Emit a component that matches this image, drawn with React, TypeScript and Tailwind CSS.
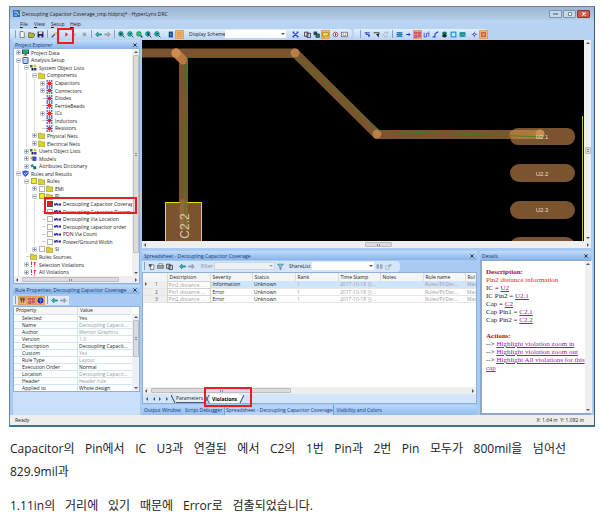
import React from "react";

type Kind =
  | "monitor" | "doc" | "objects" | "folder" | "comp" | "models" | "attrs" | "shield" | "abc" | "viol";

function TreeIcon({ kind }: { kind: Kind }) {
  return (
    <svg viewBox="0 0 14 14" className="size-[7px] shrink-0" aria-hidden="true">
      {kind === "monitor" && (
        <>
          <rect x="0" y="1" width="14" height="9" fill="#27508f" />
          <rect x="2" y="2" width="10" height="7" fill="#2fae3e" />
          <path d="M5 10h4v2h2v1H3v-1h2z" fill="#555" />
        </>
      )}
      {kind === "doc" && (
        <>
          <rect x="2" y="1" width="10" height="12" rx="1" fill="#eef2ff" stroke="#2c3fe0" strokeWidth="2" />
          <path d="M4 5h6M4 7.500h6M4 10h6" stroke="#5a74ff" />
        </>
      )}
      {kind === "objects" && (
        <>
          <rect x="0" y="2" width="5" height="5" fill="#2d7a2d" />
          <circle cx="10" cy="4" r="3" fill="#d8c820" />
          <rect x="3" y="8" width="4" height="5" fill="#222" />
          <path d="M8 8h5v5H8z" fill="#3434d8" />
        </>
      )}
      {kind === "folder" && <path d="M1 2h5l2 2h6v9H1z" fill="#d8cf33" stroke="#8d8620" />}
      {kind === "comp" && (
        <>
          <path d="M1 2h12M1 7h12M1 12h12" stroke="#3a48d8" strokeWidth="3" strokeDasharray="3 1.500" />
          <rect x="4" y="4" width="6" height="6" fill="#e02a3a" />
        </>
      )}
      {kind === "models" && (
        <>
          <path d="M0 6l5-4 3 3-3 7z" fill="#e0b020" />
          <rect x="5" y="3" width="8" height="9" rx="2" fill="#3a4ce8" />
        </>
      )}
      {kind === "attrs" && (
        <>
          <path d="M1 4l5-2 2 5-5 2z" fill="#159a8c" />
          <path d="M6 7l6-1 1 6-6 1z" fill="#107060" />
        </>
      )}
      {kind === "shield" && (
        <>
          <path d="M1 2l6-1 6 1v6l-6 6-6-6z" fill="#3654e8" />
          <path d="M4 6l3 3 4-5" stroke="#fff" strokeWidth="1.500" fill="none" />
        </>
      )}
      {kind === "abc" && (
        <>
          <path d="M0 7h14" stroke="#2a2a9a" strokeWidth="4" strokeDasharray="4 1" />
          <path d="M5 4v3" stroke="#2a2a9a" strokeWidth="2" />
        </>
      )}
      {kind === "viol" && (
        <path d="M3 1v7M3 10v2M9 3v6M9 11v2M7 4l2-2 3 2" stroke="#e83030" strokeWidth="2" fill="none" />
      )}
    </svg>
  );
}

type Row = { l: number; t: string; k: Kind; x?: "+" | "-"; c?: "off" | "on" | "red" };
const rows: Row[] = [
  { l: 0, t: "Project Data", k: "monitor", x: "+" },
  { l: 0, t: "Analysis Setup", k: "doc", x: "-" },
  { l: 1, t: "System Object Lists", k: "objects", x: "-" },
  { l: 2, t: "Components", k: "folder", x: "-" },
  { l: 3, t: "Capacitors", k: "comp", x: "+" },
  { l: 3, t: "Connectors", k: "comp", x: "+" },
  { l: 3, t: "Diodes", k: "comp" },
  { l: 3, t: "FerriteBeads", k: "comp" },
  { l: 3, t: "ICs", k: "comp", x: "+" },
  { l: 3, t: "Inductors", k: "comp" },
  { l: 3, t: "Resistors", k: "comp" },
  { l: 2, t: "Physical Nets", k: "folder", x: "+" },
  { l: 2, t: "Electrical Nets", k: "folder", x: "+" },
  { l: 1, t: "Users Object Lists", k: "objects", x: "+" },
  { l: 1, t: "Models", k: "models", x: "+" },
  { l: 1, t: "Attributes Dictionary", k: "attrs", x: "+" },
  { l: 0, t: "Rules and Results", k: "shield", x: "-" },
  { l: 1, t: "Rules", k: "folder", x: "-", c: "on" },
  { l: 2, t: "EMI", k: "folder", x: "+", c: "off" },
  { l: 2, t: "PI", k: "folder", x: "-", c: "on" },
  { l: 3, t: "Decoupling Capacitor Coverage", k: "abc", c: "red" },
  { l: 3, t: "Decoupling Capacitor Placement", k: "abc", c: "off" },
  { l: 3, t: "Decoupling Via Location", k: "abc", c: "off" },
  { l: 3, t: "Decoupling capacitor order", k: "abc", c: "off" },
  { l: 3, t: "PDN Via Count", k: "abc", c: "off" },
  { l: 3, t: "Power/Ground Width", k: "abc", c: "off" },
  { l: 2, t: "SI", k: "folder", x: "+", c: "off" },
  { l: 1, t: "Rules Sources", k: "folder" },
  { l: 1, t: "Selection Violations", k: "viol", x: "+" },
  { l: 1, t: "All Violations", k: "viol", x: "+" },
];

const boxStyle = {
  off: "bg-white border-[#b4b4b4]",
  on: "bg-[#f2ea2e] border-[#b0a840]",
  red: "bg-[#e02020] border-[#555]",
};

function TreeRow({ row }: { row: Row }) {
  const id = "rule-" + row.t.replace(/\W+/g, "-");
  return (
    <li className="flex min-h-0 flex-1 items-center">
      {Array.from({ length: row.l }, (_, i) => (
        <span key={i} className="flex h-full w-2 shrink-0 justify-center">
          <span className="w-px bg-[#dedede]" />
        </span>
      ))}
      <span className="flex h-full w-2 shrink-0 items-center justify-center">
        {row.x ? (
          <button aria-label={"Toggle " + row.t} className="flex size-[5px] items-center justify-center rounded-[1px] border border-[#c4c8d0] bg-[#f4f6fa]">
            <svg viewBox="0 0 3 3" className="size-[3px]" aria-hidden="true">
              <path d={row.x === "+" ? "M0 1.500h3M1.500 0v3" : "M0 1.500h3"} stroke="#6a7aaa" strokeWidth=".8" />
            </svg>
          </button>
        ) : (
          <span className="ml-1 h-px w-1 bg-[#d0d0d0]" />
        )}
      </span>
      {row.c && (
        <input
          id={id}
          type="checkbox"
          defaultChecked={row.c !== "off"}
          className={"mx-px size-[6px] shrink-0 appearance-none border " + boxStyle[row.c]}
        />
      )}
      <TreeIcon kind={row.k} />
      {row.c ? (
        <label htmlFor={id} className="ml-[2px] whitespace-nowrap">{row.t}</label>
      ) : (
        <span className="ml-[2px] whitespace-nowrap">{row.t}</span>
      )}
    </li>
  );
}

const tools: Record<string, React.ReactNode> = {
  "New": <path d="M2 1h5l2 2v8H2z" fill="#fff" stroke="#333" />,
  "Open": <path d="M1 3h4l1 1h4v2h2l-3 5H1z" fill="#c8b820" stroke="#333" />,
  "Save": <><path d="M1 1h10v10H1z" fill="#1c1c50" /><path d="M3 1h6v4H3zM4 8h4v3H4z" fill="#dde" /></>,
  "Wizard": <><path d="M1 11l6-6" stroke="#444" strokeWidth="2" /><path d="M6 2h5v5z" fill="#e8c020" /></>,
  "Run": <path d="M4 2l5 4-5 4z" fill="#e83020" />,
  "Step": <path d="M3 3l5 3-5 3z" fill="#b0b8c4" />,
  "Stop": <rect x="3" y="3" width="6" height="6" fill="#a0a8b4" />,
  "Back": <path d="M1 6l4-4v3h6v2H5v3z" fill="#20c8b8" stroke="#106060" />,
  "Forward": <path d="M11 6L7 2v3H1v2h6v3z" fill="#a8aeb6" stroke="#8a9098" />,
  "Zoom In": <><circle cx="5" cy="5" r="4" fill="#20d0b0" stroke="#105060" /><path d="M8 8l3 3M3 5h4M5 3v4" stroke="#123" strokeWidth="1.500" /></>,
  "Zoom Out": <><circle cx="5" cy="5" r="4" fill="#20d0b0" stroke="#105060" /><path d="M8 8l3 3M3 5h4" stroke="#123" strokeWidth="1.500" /></>,
  "Zoom Area": <><circle cx="5" cy="5" r="4" fill="#30d060" stroke="#105060" /><path d="M8 8l3 3" stroke="#123" strokeWidth="2" /></>,
  "Zoom Fit": <><circle cx="5" cy="5" r="4" fill="#20d0c0" stroke="#105060" /><path d="M8 8l3 3M5 2v5h2" stroke="#123" strokeWidth="1.500" /></>,
  "Zoom Previous": <><circle cx="5" cy="5" r="4" fill="#20d0c0" stroke="#105060" /><path d="M8 8l3 3M3 5h4L5 3" stroke="#123" strokeWidth="1.500" fill="none" /></>,
  "Board": <><rect x="3" y="1" width="7" height="10" fill="#1030d8" /><rect x="5" y="3" width="3" height="6" fill="#20a060" /></>,
  "Grid": <path d="M2 3h8M2 6h8M2 9h8M3 2v8M6 2v8M9 2v8" stroke="#d89858" />,
  "Fit": <path d="M1 2l10 8M1 10l10-8M1 2h3M8 2h3M1 10h3M8 10h3" stroke="#3040e8" strokeWidth="2" />,
  "Copy": <path d="M1 2h6v7H1zM5 4h6v7H5z" fill="#e8eef8" stroke="#334" strokeWidth="1.500" />,
  "Layers": <><path d="M1 1h6v6H1z" fill="#30406a" /><path d="M5 5h6v6H5z" fill="#208050" stroke="#223" /></>,
  "Comment": <path d="M1 3h10v5H6l-3 3V8H1z" fill="#f8e840" stroke="#886010" />,
  "Probe": <><circle cx="6" cy="6" r="4" fill="#fff" stroke="#d04050" strokeWidth="1.500" /><path d="M5 3l3 3-3 3z" fill="#333" /></>,
  "Keyboard": <><rect x="1" y="2" width="10" height="8" fill="#f4f4f4" stroke="#444" /><path d="M3 5h2M7 5h2M3 8h6" stroke="#444" /></>,
  "Net": <path d="M1 3h9M4 3v3h4v4M9 6v4" stroke="#3848d0" strokeWidth="2" fill="none" />,
  "Select": <><path d="M1 3h9v3" stroke="#444" strokeWidth="2" fill="none" /><path d="M5 5h5v6z" fill="#222" /></>,
  "Rotate": <path d="M10 4a4 4 0 1 0 0 4M10 1v3H7" stroke="#a8b0bc" strokeWidth="1.500" fill="none" />,
  "Chip": <><path d="M1 3h10M1 6h10M1 9h10" stroke="#2038c8" strokeWidth="2" /><rect x="4" y="2" width="5" height="8" fill="#20a0a0" /></>,
  "Pin": <path d="M2 6h7M7 4v4" stroke="#2038c8" strokeWidth="2" />,
  "Parts": <path d="M1 2h4v3H1zM7 2h4v3H7zM1 8h4v3H1zM7 7h4v3H7z" fill="none" stroke="#b03868" strokeWidth="1.500" />,
  "Pads": <path d="M2 3v7h4V4h4v6M9 2h2" stroke="#3848e0" strokeWidth="1.500" fill="none" />,
  "Traces": <path d="M1 10h4V5l4-3h2" stroke="#3040e8" strokeWidth="2" fill="none" />,
  "Vias": <><ellipse cx="6" cy="4" rx="4" ry="3" fill="#107858" /><ellipse cx="6" cy="8" rx="4" ry="3" fill="#103040" /></>,
  "Planes": <rect x="2" y="2" width="8" height="8" fill="#c0f0ff" stroke="#1090f0" strokeWidth="2" />,
  "View": <><rect x="1" y="2" width="10" height="8" fill="#108898" /><path d="M2 9l4-4 4 3" stroke="#80f0a0" fill="none" /></>,
  "Center": <><path d="M1 6h10M6 1v10" stroke="#3848e0" /><rect x="4" y="4" width="4" height="4" fill="#dde" stroke="#3848e0" /></>,
  "Mark": <><rect x="2" y="2" width="8" height="8" fill="#c05050" /><path d="M4 4h4v4H4z" fill="#f0b060" /></>,
  "Props": <><path d="M4 3h6v8H4z" fill="#fff" stroke="#333" /><path d="M1 2h5v4H2z" fill="#444" /></>,
  "Export": <><path d="M1 5h6v6H1z" fill="#e0e6ee" stroke="#9aa6b8" /><path d="M4 7l4-5h3v3z" fill="#9aa6b8" /></>,
  "Print": <><rect x="1" y="4" width="10" height="5" fill="#9aa0a8" stroke="#555" /><path d="M3 1h6v3H3z" fill="#fff" stroke="#666" /></>,
  "Filter": <path d="M1 2h10L7 7v4H5V7z" fill="#90c8c8" stroke="#207080" />,
  "Find": <path d="M1 2h4v8H1zM7 2h4v8H7z" fill="#9aa6b8" />,
  "Sort": <path d="M1 2h10M2 5h9M4 2v8M8 2v8" stroke="#404060" fill="none" strokeWidth="1.500" />,
  "Help": <><circle cx="6" cy="6" r="5" fill="#1828b8" /><path d="M4 5q2-3 4 0l-2 2v2" stroke="#fff" fill="none" /></>,
};

function Tool({ name, on }: { name: string; on?: boolean }) {
  return (
    <button
      aria-label={name}
      className={"flex size-[9px] shrink-0 items-center justify-center " + (on ? "bg-[#f6b26b] outline outline-[#e0a060] -outline-offset-1" : "")}
    >
      <svg viewBox="0 0 12 12" className="size-[7px]" aria-hidden="true">{tools[name]}</svg>
    </button>
  );
}

const Sep = () => <span className="mx-[2px] h-2 w-px shrink-0 bg-[#7f9fcf]" />;

function PanelHeader({ title }: { title: string }) {
  return (
    <header className="flex h-[9px] shrink-0 items-center justify-between bg-linear-to-b from-[#c3dcfb] to-[#86b3ea] px-[2px] text-[#16366f]">
      <h2 className="whitespace-nowrap">{title}</h2>
      <button aria-label={"Close " + title} className="mr-px">
        <svg viewBox="0 0 5 5" className="size-1" aria-hidden="true"><path d="M.5.5l4 4M4.500.5l-4 4" stroke="#111" /></svg>
      </button>
    </header>
  );
}

function Arrow({ dir }: { dir: "u" | "d" | "l" | "r" }) {
  const d = { u: "M1 4l2-2 2 2z", d: "M1 2l2 2 2-2z", l: "M4 1L2 3l2 2z", r: "M2 1l2 2-2 2z" }[dir];
  return (
    <svg viewBox="0 0 6 6" className="size-[6px] shrink-0" aria-hidden="true"><path d={d} fill="#555" /></svg>
  );
}

function HBar({ before, thumb }: { before: string; thumb: string }) {
  return (
    <div className="flex h-[7px] shrink-0 items-center bg-[#efefef]">
      <Arrow dir="l" />
      <div className="flex flex-1">
        <span className={before} />
        <span className={"flex h-[5px] items-center justify-center gap-px rounded-[1px] border border-[#bdbdbd] bg-[#dcdcdc] " + thumb}>
          <span className="h-[2px] w-px bg-[#888]" />
          <span className="h-[2px] w-px bg-[#888]" />
        </span>
      </div>
      <Arrow dir="r" />
    </div>
  );
}

function VBar({ before, thumb }: { before: string; thumb: string }) {
  return (
    <div className="flex w-[7px] shrink-0 flex-col items-center bg-[#efefef]">
      <Arrow dir="u" />
      <div className="flex min-h-0 w-full flex-1 flex-col items-center">
        <span className={before} />
        {thumb && (
          <span className={"flex w-[6px] flex-col items-center justify-center gap-px rounded-[1px] border border-[#bdbdbd] bg-[#dcdcdc] " + thumb}>
            <span className="h-px w-[2px] bg-[#888]" />
            <span className="h-px w-[2px] bg-[#888]" />
          </span>
        )}
      </div>
      <Arrow dir="d" />
    </div>
  );
}

const props: [string, string, boolean][] = [
  ["Selected", "Yes", true],
  ["Name", "Decoupling Capacit...", false],
  ["Author", "Mentor Graphics", false],
  ["Version", "1.0", false],
  ["Description", "Decoupling Capacit...", true],
  ["Custom", "Yes", false],
  ["Rule Type", "Layout", false],
  ["Execution Order", "Normal", true],
  ["Location", "Decoupling Capacit...", false],
  ["Header", "header.rule", false],
  ["Applied to", "Whole design", true],
];

const violations = [
  ["1", "Pin2 distance ...", "Information"],
  ["2", "Pin1 distance ...", "Error"],
  ["3", "Pin2 distance ...", "Error"],
];

function Board() {
  return (
    <svg viewBox="142 40 441 201" preserveAspectRatio="xMinYMin meet" className="h-full min-w-0 flex-1 bg-black" role="img" aria-label="Board layout">
      <g stroke="#7a532f" strokeWidth="9" fill="none">
        <path d="M142 53H295" />
        <path d="M295 53L377 134.500" strokeLinecap="round" />
        <path d="M377 134.500H540" />
        <path d="M183.500 60V228" strokeLinecap="round" />
      </g>
      <rect x="165.500" y="202.500" width="36" height="45" fill="#7a532f" stroke="#e6e000" />
      <path d="M183.500 203V226" stroke="#96653a" strokeWidth="8" strokeLinecap="round" />
      <g fill="#7a532f">
        <rect x="510" y="128" width="65" height="17" rx="8" />
        <rect x="510" y="164" width="65" height="18" rx="9" />
        <rect x="510" y="201" width="65" height="18" rx="9" />
        <rect x="510" y="237" width="65" height="18" rx="9" />
      </g>
      <path d="M514 134.500H540" stroke="#b07640" strokeWidth="9" strokeLinecap="round" />
      <path d="M176 53l7 7" stroke="#b87a45" strokeWidth="9" strokeLinecap="round" />
      <g fill="#d08c50">
        <circle cx="176" cy="53" r="4.500" />
        <circle cx="295" cy="53" r="4.500" fill="#b87d48" />
        <circle cx="377" cy="134" r="4.500" fill="#b87d48" />
        <circle cx="540" cy="134" r="4.500" />
      </g>
      <path d="M185 228V125L187 57.500H297L380 131L545 137" stroke="#2c8a12" strokeWidth=".8" fill="none" />
      <path d="M582.500 116V241" stroke="#c8c400" />
      <g fill="#eadfce" fontFamily="Liberation Sans, sans-serif" fontSize="6" textAnchor="middle">
        <text x="542" y="139">U2.1</text>
        <text x="542" y="176">U2.2</text>
        <text x="542" y="212">U2.3</text>
        <text transform="translate(189 226) rotate(-90)" fontSize="12" fill="#d8cbb8">C2.2</text>
      </g>
    </svg>
  );
}

const link = "text-[#9a1aa0] underline";

export default function App() {
  return (
    <main className="bg-white pt-[6px] text-[5px] leading-[6px] text-[#1c1c1c] font-['Open_Sans','Noto_Sans_CJK_KR',sans-serif]">
      <section className="relative mr-[5px] ml-[9px] border border-b-2 border-[#6d8299] border-r-[#38606e] border-b-[#37798a] bg-[#b9d3f2]">
        <header className="flex h-[13px] items-center bg-linear-to-b from-[#9db5cf] to-[#b4cdea] pr-1 pl-[3px]">
          <svg viewBox="0 0 14 14" className="mr-[2px] size-[7px]" aria-hidden="true">
            <rect width="14" height="14" fill="#2c6fd8" /><path d="M2 4h6l4 6M3 10h5" stroke="#fff" strokeWidth="1.500" fill="none" />
          </svg>
          <h1 className="flex-1 whitespace-nowrap">Decoupling Capacitor Coverage_tmp.hldproj* - HyperLynx DRC</h1>
          <div className="flex gap-px text-[#33475f]">
            <button aria-label="Minimize" className="flex h-2 w-[13px] items-center justify-center rounded-[1px] border border-[#7d94ad] bg-[#c8d8ea]"><span className="h-[2px] w-[5px] border border-[#8193a8] bg-white" /></button>
            <button aria-label="Maximize" className="flex h-2 w-[13px] items-center justify-center rounded-[1px] border border-[#7d94ad] bg-[#c8d8ea]"><span className="size-1 border border-[#8193a8] bg-white" /></button>
            <button aria-label="Close" className="flex h-2 w-[13px] items-center justify-center rounded-[1px] border border-[#7b3a34] bg-[#cf5a48]">
              <svg viewBox="0 0 5 5" className="size-1" aria-hidden="true"><path d="M.5.5l4 4M4.500.5l-4 4" stroke="#fff" strokeWidth="1.500" /></svg>
            </button>
          </div>
        </header>

        <nav className="flex h-2 items-center gap-[5px] pl-[10px]">
          {["File", "View", "Setup", "Help"].map((m) => (
            <button key={m} className="w-3 text-left whitespace-nowrap first:w-[9px] nth-3:w-[14px]"><span className="underline">{m[0]}</span>{m.slice(1)}</button>
          ))}
        </nav>

        <div className="flex h-3 items-center">
          <div className="flex h-[10px] items-center rounded-r-sm bg-linear-to-b from-[#e2eefd] to-[#bcd5f5] pr-[3px] pl-[3px]">
            <Sep /><Tool name="New" /><Tool name="Open" /><Tool name="Save" /><Sep />
            <Tool name="Wizard" /><span className="w-[3px]" /><Tool name="Run" /><Tool name="Step" /><Tool name="Stop" />
            <Sep /><Tool name="Back" /><Tool name="Forward" /><Sep />
            <Tool name="Zoom In" /><Tool name="Zoom Out" /><Tool name="Zoom Area" /><Tool name="Zoom Fit" /><Tool name="Zoom Previous" />
            <span className="w-1" /><Tool name="Board" /><Tool name="Grid" on />
            <label htmlFor="scheme" className="ml-[5px] w-[36px] whitespace-nowrap">Display Scheme</label>
            <span className="relative flex h-2 w-[61px] bg-white">
              <select id="scheme" className="w-full appearance-none bg-transparent"><option></option></select>
              <span className="pointer-events-none absolute top-px right-0"><Arrow dir="d" /></span>
            </span>
            <span className="w-[5px]" /><Tool name="Fit" /><span className="w-[3px]" />
            <Tool name="Copy" /><Tool name="Layers" /><Tool name="Comment" on /><span className="w-px" /><Tool name="Probe" /><Tool name="Keyboard" />
          </div>
          <div className="ml-[2px] flex h-[10px] items-center rounded-r-sm bg-linear-to-b from-[#e2eefd] to-[#bcd5f5] pl-1">
            <Sep /><Tool name="Net" /><Tool name="Select" /><Tool name="Rotate" /><Sep />
            <Tool name="Chip" /><Tool name="Pin" /><Tool name="Parts" on /><Tool name="Pads" /><Tool name="Traces" /><Tool name="Vias" /><Tool name="Planes" /><Tool name="View" />
            <span className="w-[3px]" /><Tool name="Center" /><Tool name="Mark" on />
          </div>
        </div>

        <div className="flex gap-[2px] bg-[#a9caf3] pr-[3px] pl-[3px]">
          <aside className="flex w-[127px] shrink-0 flex-col">
            <PanelHeader title="Project Explorer" />
            <div className="flex flex-col border border-t-0 border-[#8fb0dc] bg-white">
              <div className="flex h-[227px]">
                <ul className="flex min-w-0 flex-1 flex-col overflow-hidden">
                  {rows.map((r) => <TreeRow key={r.t} row={r} />)}
                </ul>
                <VBar before="" thumb="h-[198px]" />
              </div>
              <HBar before="w-[2px]" thumb="w-[97px]" />
            </div>
            <div className="mt-px flex flex-1 flex-col bg-[#c9e0fc]">
              <PanelHeader title="Rule Properties: Decoupling Capacitor Coverage" />
              <div className="flex h-3 items-center bg-[#a9caf3]">
                <div className="flex items-center bg-[#dceafc] pr-px">
                  <Sep /><Tool name="Sort" on /><Tool name="Parts" on /><Tool name="Help" on /><Sep /><Tool name="Back" /><Tool name="Forward" />
                </div>
              </div>
              <div className="border border-[#8fb0dc] bg-white">
                <div className="flex">
                  <table className="flex-1 table-fixed border-collapse">
                    <thead>
                      <tr className="h-[7px] bg-[#f6f6f6] text-left">
                        <th className="w-[63px] p-0 pl-[2px] leading-[6px] font-normal">Property</th>
                        <th className="w-[54px] border-l border-[#ddd] p-0 pl-[2px] leading-[6px] font-normal">Value</th>
                      </tr>
                    </thead>
                    <tbody>
                      {props.map(([k, v, dark]) => (
                        <tr key={k} className="h-[7px] border-t border-[#cfe6f7]">
                          <th scope="row" className="py-0 pl-2 text-left leading-[6px] font-normal whitespace-nowrap">{k}</th>
                          <td className={"border-l border-[#cfe6f7] py-0 pl-px leading-[6px] whitespace-nowrap " + (dark ? "" : "text-[#9a9a9a]")}>{v}</td>
                        </tr>
                      ))}
                    </tbody>
                  </table>
                  <div className="flex pt-[7px]"><VBar before="" thumb="h-[37px]" /></div>
                </div>
              </div>
              <div className="h-[23px]" />
            </div>
          </aside>

          <div className="flex min-w-0 flex-1 flex-col">
            <div className="flex h-[201px] bg-black">
              <Board />
              <VBar before="h-[101px]" thumb="h-[7px]" />
            </div>
            <HBar before="w-[217px]" thumb="w-[27px]" />
            <div className="mt-[3px] flex flex-1 gap-[3px]">
              <section className="flex min-w-0 flex-1 flex-col">
                <PanelHeader title="Spreadsheet - Decoupling Capacitor Coverage" />
                <div className="flex h-3 items-center">
                  <div className="flex h-[11px] items-center rounded-r-sm bg-[#d5e6fb] pr-[7px]">
                    <Sep /><Tool name="Props" /><Tool name="Print" /><Tool name="Copy" /><span className="w-[4px]" /><Tool name="Back" /><Tool name="Forward" />
                    <label htmlFor="filter" className="ml-[5px] w-[13px] text-[#7f8da0]">Filter</label>
                    <span className="relative flex h-2 w-[61px] border border-[#cdd6e0] bg-[#eef0f2]">
                      <select id="filter" disabled className="w-full appearance-none"><option></option></select>
                      <span className="pointer-events-none absolute top-0 right-0 opacity-50"><Arrow dir="d" /></span>
                    </span>
                    <span className="w-px" /><Tool name="Filter" />
                    <label htmlFor="share" className="mr-px ml-1 w-[22px] whitespace-nowrap">ShareList</label>
                    <span className="relative flex h-2 w-[62px] bg-white">
                      <select id="share" className="w-full appearance-none"><option></option></select>
                      <span className="pointer-events-none absolute top-px right-0"><Arrow dir="d" /></span>
                    </span>
                    <span className="w-px" /><Tool name="Find" /><Tool name="Export" />
                  </div>
                </div>
                <div className="flex flex-1 flex-col border border-[#8fb0dc] bg-white">
                  <div className="flex-1">
                    <table className="w-full table-fixed border-collapse text-left whitespace-nowrap">
                      <colgroup>
                        <col className="w-[24px]" /><col className="w-[43px]" /><col className="w-[42px]" /><col className="w-[43px]" /><col className="w-[43px]" />
                        <col className="w-[42px]" /><col className="w-[43px]" /><col className="w-[42px]" /><col />
                      </colgroup>
                      <thead>
                        <tr className="h-2 bg-[#f5f5f5]">
                          <td></td>
                          {["Description", "Severity", "Status", "Rank", "Time Stamp", "Notes", "Rule name", "Rul"].map((h) => (
                            <th key={h} className="overflow-hidden border-l border-[#dcdcdc] p-0 pl-[2px] font-normal">{h}</th>
                          ))}
                        </tr>
                      </thead>
                      <tbody>
                        {violations.map(([n, d, s], i) => (
                          <tr key={n} className={"h-[7px] border-b border-[#e6e6e6] text-[#9a9a9a] " + (i === 0 ? "bg-[#cfe5fc]" : "")}>
                            <th scope="row" className="bg-[#eeeeee] p-0 font-normal text-[#555]">
                              <span className="flex items-center"><span className="w-3">{i === 0 && <Arrow dir="r" />}</span>{n}</span>
                            </th>
                            <td className="overflow-hidden border border-[#d2d2d2] bg-white p-0 pl-px leading-[6px]">{d}</td>
                            <td className="p-0 pl-[2px] leading-[6px] text-[#1c1c1c]">{s}</td>
                            <td className="p-0 pl-[2px] leading-[6px] text-[#1c1c1c]">Unknown</td>
                            <td className="p-0 pl-[2px] leading-[6px]">1</td>
                            <td className="p-0 pl-[2px] leading-[6px]">2017-10-18 오...</td>
                            <td className="p-0"></td>
                            <td className="p-0 pl-[2px] leading-[6px]">Rules/PI/Dec...</td>
                            <td className="overflow-hidden p-0 pl-[2px] leading-[6px]">Mac</td>
                          </tr>
                        ))}
                      </tbody>
                    </table>
                  </div>
                  <HBar before="w-[2px]" thumb="w-[140px]" />
                  <div className="flex h-[9px] items-center bg-[#d3e5fa]">
                    <div className="flex w-[28px] justify-between px-px"><Arrow dir="l" /><Arrow dir="l" /><Arrow dir="r" /><Arrow dir="r" /></div>
                    <svg viewBox="0 0 5 8" className="h-2 w-[5px]" aria-hidden="true"><path d="M0 0l4 8" stroke="#335" fill="none" /></svg>
                    <button className="h-full border-b border-[#556] bg-[#e4effc] pr-px">Parameters</button>
                    <svg viewBox="0 0 6 8" className="h-2 w-[6px]" aria-hidden="true"><path d="M5 0L1 8M1 0l4 8" stroke="#335" strokeWidth=".8" fill="none" /></svg>
                    <button className="h-full bg-white px-[2px] font-bold text-black">Violations</button>
                    <svg viewBox="0 0 5 8" className="h-2 w-[5px]" aria-hidden="true"><path d="M0 0h5L1 8H0z" fill="#fff" /><path d="M5 0L1 8" stroke="#335" /></svg>
                  </div>
                </div>
                <nav className="mt-px flex h-[10px] items-center bg-linear-to-b from-[#b7d5fa] to-[#93bdf0] whitespace-nowrap text-[#16366f]">
                  <button className="w-[41px] pl-[2px] text-left">Output Window</button>
                  <button className="w-[41px] pl-[2px] text-left">Script Debugger</button>
                  <button className="h-full border-x border-[#6f9bd6] bg-[#b5d3f8] px-px text-center">Spreadsheet - Decoupling Capacitor Coverage</button>
                  <button className="pl-[2px]">Visibility and Colors</button>
                </nav>
              </section>

              <aside className="flex w-[111px] shrink-0 flex-col">
                <PanelHeader title="Details" />
                <div className="flex flex-1 border-2 border-t border-[#8fa8c8] bg-white">
                  <div className="flex-1 pt-[7px] pl-1 font-['Liberation_Serif',serif] text-[7px] leading-[8px] whitespace-nowrap">
                    <h3 className="font-bold text-[#a01414]">Description:</h3>
                    <p className="text-[#f02020]">Pin2 distance information</p>
                    <p>IC = <a href="#u2" className={link}>U2</a></p>
                    <p>IC Pin2 = <a href="#u21" className={link}>U2.1</a></p>
                    <p>Cap = <a href="#c2" className={link}>C2</a></p>
                    <p>Cap Pin1 = <a href="#c21" className={link}>C2.1</a></p>
                    <p>Cap Pin2 = <a href="#c22" className={link}>C2.2</a></p>
                    <h3 className="mt-2 font-bold text-[#a01414]">Actions:</h3>
                    <p>--&gt; <a href="#in" className={link}>Highlight violation zoom in</a></p>
                    <p>--&gt; <a href="#out" className={link}>Highlight violation zoom out</a></p>
                    <p>--&gt; <a href="#all" className={link}>Highlight All violations for this<br />cap</a></p>
                  </div>
                  <VBar before="" thumb="" />
                </div>
              </aside>
            </div>
          </div>
        </div>

        <footer className="flex h-[10px] items-center justify-between bg-[#eeeeee] pr-[10px] pl-[5px]">
          <span>Ready</span>
          <span>X: 1.64 in&nbsp; Y: 1.082 in</span>
        </footer>

        <span className="pointer-events-none absolute top-[21px] left-[47px] h-[16px] w-[17px] border-2 border-[#ec1c24]" />
        <span className="pointer-events-none absolute top-[190px] left-[34px] h-[17px] w-[93px] border-2 border-[#ec1c24]" />
        <span className="pointer-events-none absolute top-[380px] left-[194px] h-[20px] w-[48px] border-2 border-[#ec1c24]" />
      </section>

      <article className="mt-[10px] mr-[34px] ml-[10px] text-[12px] leading-[23px] text-[#222]">
        <p>
          <span className="block [text-align-last:justify]">Capacitor의 Pin에서 IC U3과 연결된 에서 C2의 1번 Pin과 2번 Pin 모두가 800mil을 넘어선</span>
          829.9mil과
        </p>
        <p className="mt-[11px] w-[303px] whitespace-nowrap [text-align-last:justify]">1.11in의 거리에 있기 때문에 Error로 검출되었습니다.</p>
      </article>
    </main>
  );
}
